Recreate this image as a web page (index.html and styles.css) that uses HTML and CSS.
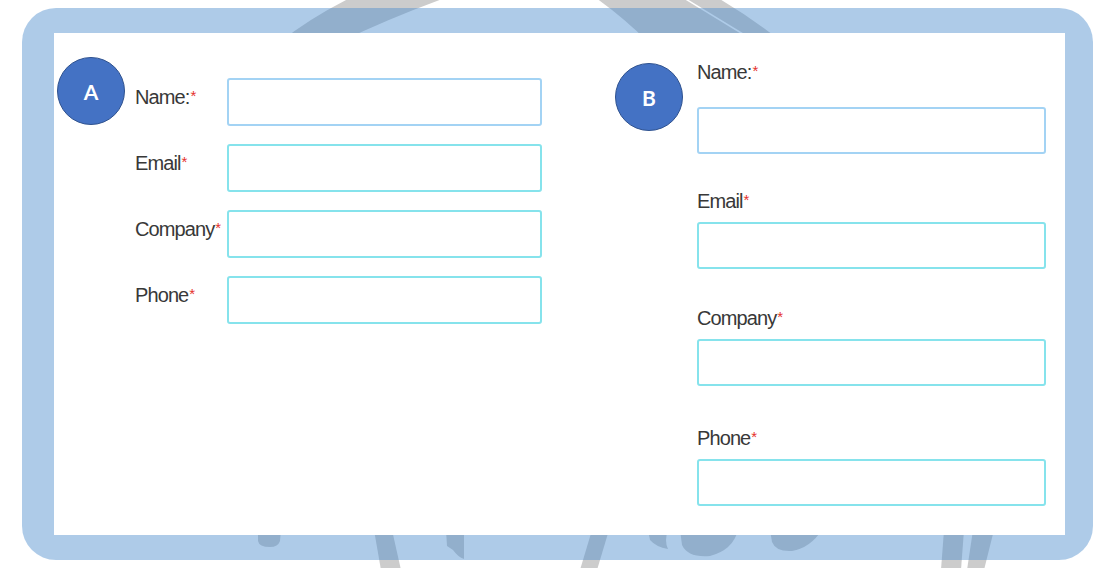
FILE: index.html
```html
<!DOCTYPE html>
<html lang="en">
<head>
  <meta charset="UTF-8" />
  <meta name="viewport" content="width=device-width, initial-scale=1" />
  <title>Contact form layouts</title>
  <link rel="stylesheet" href="styles.css">
</head>
<body>
  <!-- faint logo behind the frame -->
  <svg class="watermark" viewBox="0 0 1101 568" width="1101" height="568" aria-hidden="true">
    <g fill="#cccccc">
      <path d="M280,42 Q310,18 350,-2 L445,-2 Q390,18 340,42 Z" />
      <path d="M596,-2 L718,-2 Q752,18 782,42 L648,42 Q624,18 596,-2 Z" />
      <path d="M258,530 L281,530 L280,541 Q278,547 270,547 Q259,547 258,541 Z" />
      <path d="M374,530 L392,530 L401,570 L381,570 Z" />
      <path d="M446,530 L464,530 L464,559 Q458,557 453,550 L447,546 Z" />
      <path d="M592,530 L609,530 L597,570 L580,570 Z" />
      <path d="M648,530 L668,530 Q664,541 668,549 Q656,547 650,540 Z" />
      <path d="M680,530 L738,530 Q733,550 710,556 Q688,558 682,545 Z" />
      <path d="M770,530 L822,530 Q810,548 792,551 Q776,552 772,542 Z" />
      <path d="M944,530 L964,530 L961,570 L941,570 Z" />
      <path d="M973,530 L994,530 L984,570 L967,570 Z" />
    </g>
    <path d="M684,-2 L756,42" stroke="#ffffff" stroke-width="1.5" fill="none" />
  </svg>

  <div class="frame">
    <div class="panel">
      <section class="variant variant-a">
        <span class="badge">A</span>
        <form class="form-inline">
          <label class="field-label" for="a-name">Name:<span class="req">*</span></label>
          <input id="a-name" class="field field-first" type="text">
          <label class="field-label" for="a-email">Email<span class="req">*</span></label>
          <input id="a-email" class="field" type="email">
          <label class="field-label" for="a-company">Company<span class="req">*</span></label>
          <input id="a-company" class="field" type="text">
          <label class="field-label" for="a-phone">Phone<span class="req">*</span></label>
          <input id="a-phone" class="field" type="tel">
        </form>
      </section>

      <section class="variant variant-b">
        <span class="badge">B</span>
        <form class="form-stacked">
          <div class="field-group field-group-first">
            <label class="field-label" for="b-name">Name:<span class="req">*</span></label>
            <input id="b-name" class="field field-first" type="text">
          </div>
          <div class="field-group">
            <label class="field-label" for="b-email">Email<span class="req">*</span></label>
            <input id="b-email" class="field" type="email">
          </div>
          <div class="field-group">
            <label class="field-label" for="b-company">Company<span class="req">*</span></label>
            <input id="b-company" class="field" type="text">
          </div>
          <div class="field-group">
            <label class="field-label" for="b-phone">Phone<span class="req">*</span></label>
            <input id="b-phone" class="field" type="tel">
          </div>
        </form>
      </section>
    </div>
  </div>
</body>
</html>
```

FILE: styles.css
```css
:root {
  --frame-blue: rgba(79, 142, 205, 0.46);
  --badge-blue: #4472c4;
  --badge-edge: #2f528f;
  --field-cyan: #86e3ec;
  --field-sky: #a3d3f4;
  --label: #383838;
  --required: #e5312c;
}

* {
  box-sizing: border-box;
}

body {
  margin: 0;
  height: 568px;
  overflow: hidden;
  position: relative;
  background: #fff;
  font-family: 'Liberation Sans', Arial, sans-serif;
}

.watermark {
  position: absolute;
  top: 0;
  left: 0;
}

.frame {
  position: relative;
  width: 1071px;
  height: 552px;
  margin: 8px 0 0 22px;
  padding: 25px 28px 25px 32px;
  background: var(--frame-blue);
  border-radius: 34px;
}

.panel {
  height: 100%;
  background: #fff;
  display: flex;
}

.variant {
  display: flex;
  align-items: flex-start;
}

.badge {
  flex-shrink: 0;
  width: 68px;
  height: 68px;
  border-radius: 50%;
  background: var(--badge-blue);
  border: 1px solid var(--badge-edge);
  display: flex;
  align-items: center;
  justify-content: center;
  color: #fff;
  font-family: Lato, 'Open Sans', sans-serif;
  font-weight: 700;
  font-size: 21px;
}

/* narrow-looking labels: squeeze the tracking */
.field-label {
  font-size: 20px;
  line-height: 24px;
  color: var(--label);
  letter-spacing: -0.9px;
}

.req {
  color: var(--required);
  font-size: 15px;
  line-height: 1;
  vertical-align: 3px;
  margin-left: 1px;
}

.field {
  display: block;
  width: 100%;
  margin: 0;
  padding: 0 8px;
  border: 2px solid var(--field-cyan);
  border-radius: 3px;
  background: #fff;
  font: inherit;
  outline: none;
}

.field-first {
  border-color: var(--field-sky);
}

/* A: labels beside the fields */
.variant-a {
  width: 561px;
  padding: 24px 0 0 3px;
}

.form-inline {
  display: grid;
  grid-template-columns: 92px 315px;
  grid-auto-rows: 48px;
  row-gap: 18px;
  margin: 21px 0 0 10px;
}

.form-inline .field-label {
  padding-top: 7px;
}

.form-inline .field {
  height: 48px;
}

/* B: labels above the fields */
.variant-b {
  padding-top: 27px;
}

.variant-b .badge {
  margin-top: 3px;
}

.form-stacked {
  width: 349px;
  margin-left: 14px;
  display: flex;
  flex-direction: column;
  gap: 37px;
}

.field-group {
  display: flex;
  flex-direction: column;
  gap: 9px;
}

.field-group-first {
  gap: 23px;
  margin-bottom: -2px;
}

.field-group:last-child {
  margin-top: 3px;
}

.form-stacked .field {
  height: 47px;
}
```
